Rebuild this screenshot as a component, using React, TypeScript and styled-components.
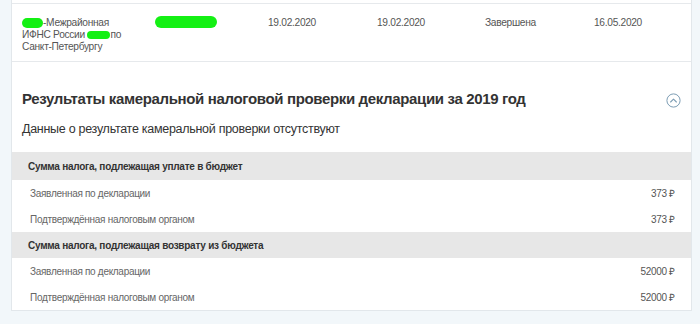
import styled, { createGlobalStyle } from 'styled-components'

const GlobalStyle = createGlobalStyle`
  html, body { margin: 0; padding: 0; }
  body {
    background: #f2f7fa;
    font-family: "Liberation Sans", Arial, sans-serif;
    color: #333;
  }
`

type Row = { label: string; value?: string }
type Group = { title: string; rows: Row[] }

const groups: Group[] = [
  {
    title: 'Сумма налога, подлежащая уплате в бюджет',
    rows: [
      { label: 'Заявленная по декларации', value: '373' },
      { label: 'Подтверждённая налоговым органом', value: '373' },
    ],
  },
  {
    title: 'Сумма налога, подлежащая возврату из бюджета',
    rows: [
      { label: 'Заявленная по декларации', value: '52000' },
      { label: 'Подтверждённая налоговым органом', value: '52000' },
    ],
  },
]

function ChevronCircle() {
  return (
    <svg width="15" height="15" viewBox="0 0 15 15" fill="none">
      <circle cx="7.5" cy="7.5" r="6.6" stroke="#7d9db4" strokeWidth="1" />
      <path d="M4.6 9 L7.5 6.1 L10.4 9" stroke="#7d9db4" strokeWidth="1.1" strokeLinecap="round" strokeLinejoin="round" />
    </svg>
  )
}

export default function App() {
  return (
    <>
      <GlobalStyle />
      <Page>
        <Card>
          <DeclRow>
            <Cell>
              <Blot w={21} h={10} />-Межрайонная<br />
              ИФНС России <Blot w={23} h={8} />по<br />
              Санкт-Петербургу
            </Cell>
            <Cell><Blot w={62} h={12} $lift={-1} /></Cell>
            <Cell>19.02.2020</Cell>
            <Cell>19.02.2020</Cell>
            <Cell>Завершена</Cell>
            <Cell>16.05.2020</Cell>
          </DeclRow>

          <Section>
            <SectionHead>
              <h2>Результаты камеральной налоговой проверки декларации за 2019 год</h2>
              <Toggle><ChevronCircle /></Toggle>
            </SectionHead>
            <Note>Данные о результате камеральной проверки отсутствуют</Note>
          </Section>

          <Table>
            {groups.map((g, gi) => (
              <div key={gi}>
                <Band $first={gi === 0}>{g.title}</Band>
                {g.rows.map((r, ri) => (
                  <Line key={ri}>
                    <span>{r.label}</span>
                    <Amount>{r.value} ₽</Amount>
                  </Line>
                ))}
              </div>
            ))}
          </Table>
        </Card>
      </Page>
    </>
  )
}

const Page = styled.div`
  width: 700px; height: 324px; overflow: hidden;
  padding: 0 8px 0 11px; box-sizing: border-box;
`

const Card = styled.div`
  background: #fff;
  border: 1px solid #e2e7eb; border-top: none;
  padding-top: 3px;
`

const DeclRow = styled.div`
  display: grid;
  grid-template-columns: 133px 113px 109px 108px 109px 1fr;
  padding: 12px 10px 0 10px; height: 59px; box-sizing: border-box;
  border-top: 1px solid #e6e9ec; border-bottom: 1px solid #e6e9ec;
`

const Cell = styled.div`
  font-size: 10.2px; line-height: 12px; color: #555; letter-spacing: -0.3px;
  padding-top: 1px;
`

const Blot = styled.span<{ w: number; h: number; $lift?: number }>`
  display: inline-block; vertical-align: middle;
  width: ${p => p.w}px; height: ${p => p.h}px;
  border-radius: ${p => p.h / 2}px;
  background: #14f014;
  filter: blur(0.6px);
  position: relative; top: ${p => p.$lift ?? 0}px;
`

const Section = styled.section`
  padding: 27px 10px 0 10px;
`

const SectionHead = styled.div`
  display: flex; align-items: center; justify-content: space-between;
  h2 {
    margin: 0; font-size: 15px; line-height: 20px; font-weight: bold; color: #333;
    letter-spacing: -0.35px;
  }
`

const Toggle = styled.span`
  display: flex; margin-top: 2px; margin-right: 0;
`

const Note = styled.p`
  margin: 12px 0 0 0; font-size: 12.5px; line-height: 16px; color: #333;
  letter-spacing: -0.28px;
`

const Table = styled.div`
  margin-top: 15px;
`

const Band = styled.div<{ $first?: boolean }>`
  background: #e7e7e7;
  height: ${p => (p.$first ? 28 : 26)}px;
  display: flex; align-items: center;
  padding: 0 16px;
  font-size: 10px; font-weight: bold; color: #333; letter-spacing: -0.25px;
`

const Line = styled.div`
  height: 26px;
  display: flex; align-items: center; justify-content: space-between;
  padding: 0 16px 0 18px;
  font-size: 10px; color: #666; letter-spacing: -0.3px;
`

const Amount = styled.span`
  color: #555;
`
